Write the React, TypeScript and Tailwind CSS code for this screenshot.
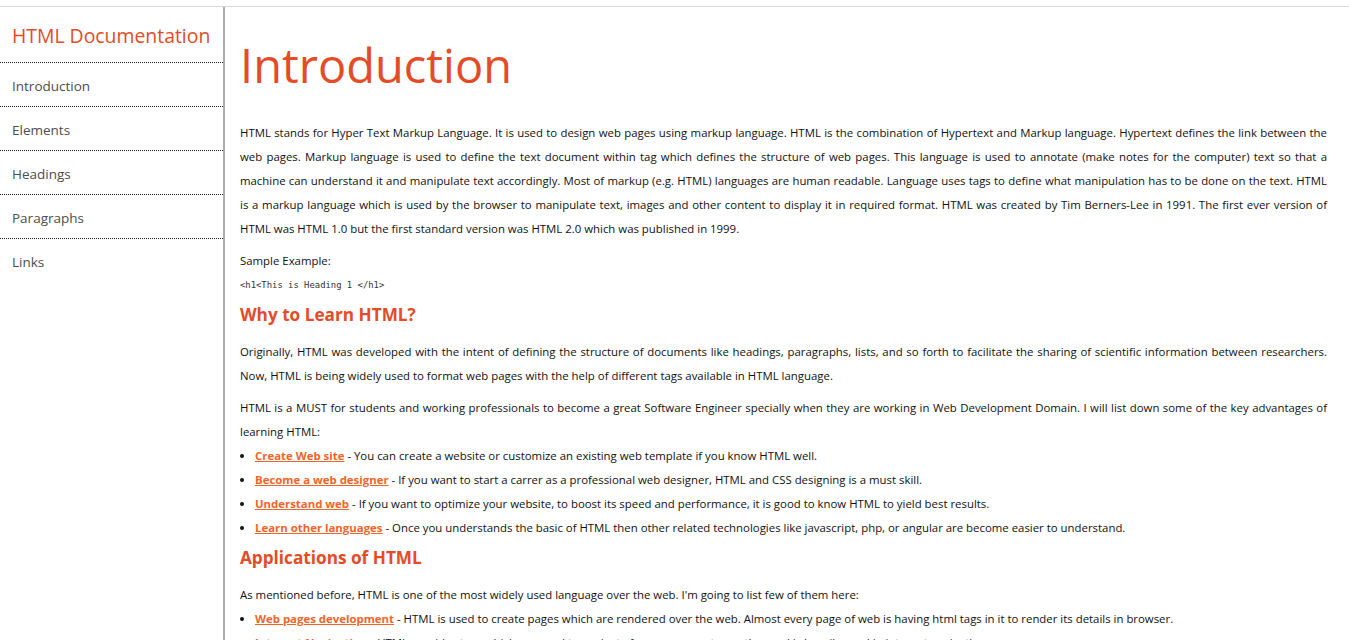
import React from "react";

const navItems = ["Introduction", "Elements", "Headings", "Paragraphs", "Links"];

const learnItems = [
  { title: "Create Web site", text: "You can create a website or customize an existing web template if you know HTML well." },
  { title: "Become a web designer", text: "If you want to start a carrer as a professional web designer, HTML and CSS designing is a must skill." },
  { title: "Understand web", text: "If you want to optimize your website, to boost its speed and performance, it is good to know HTML to yield best results." },
  { title: "Learn other languages", text: "Once you understands the basic of HTML then other related technologies like javascript, php, or angular are become easier to understand." },
];

const appItems = [
  { title: "Web pages development", text: "HTML is used to create pages which are rendered over the web. Almost every page of web is having html tags in it to render its details in browser." },
  { title: "Internet Navigation", text: "HTML provides tags which are used to navigate from one page to another and is heavily used in internet navigation." },
  { title: "Responsive UI", text: "HTML pages now-a-days works well on all platform, mobile, tabs, desktop or laptops owing to responsive design strategy." },
];

const LinkList: React.FC<{ items: { title: string; text: string }[] }> = ({ items }) => (
  <ul className="list-disc pl-[15px]">
    {items.map((it) => (
      <li key={it.title} className="leading-[24px]">
        <a href="#" className="font-bold text-[#f06529] underline">
          {it.title}
        </a>{" "}
        - {it.text}
      </li>
    ))}
  </ul>
);

export default function App() {
  return (
    <div className="h-screen overflow-hidden flex flex-col bg-white font-['Open_Sans',sans-serif]">
      <div className="h-[7px] shrink-0 border-b border-[#dadada]" />

      <div className="flex flex-1 min-h-0">
        {/* barra lateral */}
        <nav className="w-[225px] shrink-0 border-r-2 border-[#a9aeb1]">
          <header className="h-[56px] flex items-center px-3 pt-[2px] border-b border-dotted border-[#222] text-[19.4px] text-[#e34c26]">
            HTML Documentation
          </header>
          {navItems.map((item, i) => (
            <a
              key={item}
              href="#"
              className={
                "h-[44px] flex items-center px-3 pt-[3px] text-[13.5px] text-[#4d4d4d] " +
                (i < navItems.length - 1 ? "border-b border-dotted border-[#222]" : "")
              }
            >
              {item}
            </a>
          ))}
        </nav>

        {/* conteudo */}
        <main className="flex-1 min-w-0 overflow-hidden flex flex-col pl-[15px] pr-[22px] text-[11.4px] text-[#111]">
          <h1 className="mt-[30px] text-[47px] leading-[56px] text-[#e34c26]">Introduction</h1>

          <p className="mt-[28px] leading-[24px] text-justify">
            HTML stands for Hyper Text Markup Language. It is used to design web pages using markup language. HTML is
            the combination of Hypertext and Markup language. Hypertext defines the link between the web pages. Markup
            language is used to define the text document within tag which defines the structure of web pages. This
            language is used to annotate (make notes for the computer) text so that a machine can understand it and
            manipulate text accordingly. Most of markup (e.g. HTML) languages are human readable. Language uses tags to
            define what manipulation has to be done on the text. HTML is a markup language which is used by the browser
            to manipulate text, images and other content to display it in required format. HTML was created by Tim
            Berners-Lee in 1991. The first ever version of HTML was HTML 1.0 but the first standard version was HTML 2.0
            which was published in 1999.
          </p>

          <p className="mt-[8px] leading-[24px]">Sample Example:</p>
          <code className="leading-[24px] font-['DejaVu_Sans_Mono',monospace] text-[8.9px] text-[#333]">
            {"<h1<This is Heading 1 </h1>"}
          </code>

          <h2 className="mt-[6px] text-[17.2px] leading-[24px] font-bold text-[#e34c26]">Why to Learn HTML?</h2>

          <p className="mt-[13px] leading-[24px] text-justify">
            Originally, HTML was developed with the intent of defining the structure of documents like headings,
            paragraphs, lists, and so forth to facilitate the sharing of scientific information between researchers.
            Now, HTML is being widely used to format web pages with the help of different tags available in HTML
            language.
          </p>

          <p className="mt-[8px] leading-[24px] text-justify">
            HTML is a MUST for students and working professionals to become a great Software Engineer specially when
            they are working in Web Development Domain. I will list down some of the key advantages of learning HTML:
          </p>

          <LinkList items={learnItems} />

          <h2 className="mt-[6px] text-[17.2px] leading-[24px] font-bold text-[#e34c26]">Applications of HTML</h2>

          <p className="mt-[13px] leading-[24px]">
            As mentioned before, HTML is one of the most widely used language over the web. I'm going to list few of
            them here:
          </p>

          <LinkList items={appItems} />
        </main>
      </div>
    </div>
  );
}
